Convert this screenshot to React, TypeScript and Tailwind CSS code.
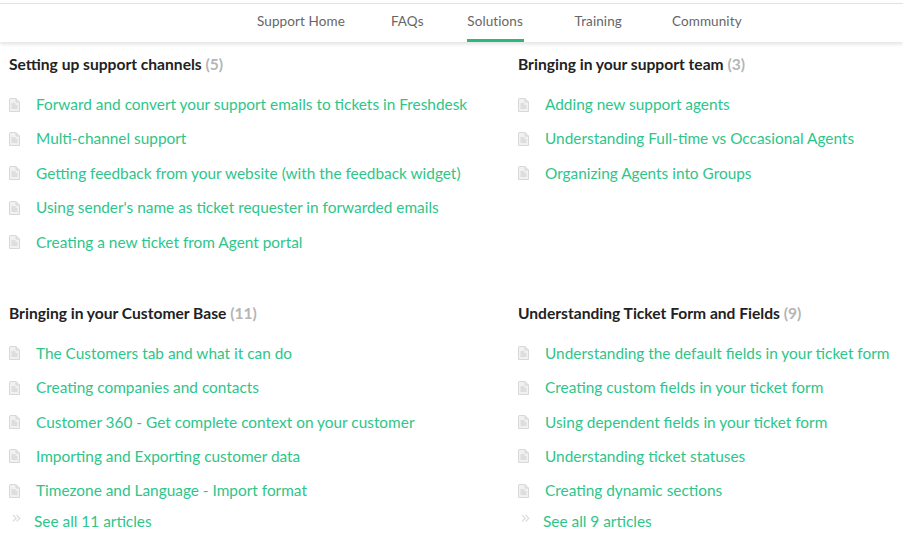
const FONT = "font-['Lato','Noto_Sans',sans-serif]";

const tabs = [
  { label: "Support Home", margin: "ml-[257px]" },
  { label: "FAQs", margin: "ml-[46px]" },
  { label: "Solutions", margin: "ml-[43px] w-[57px] justify-center", active: true },
  { label: "Training", margin: "ml-[51px]" },
  { label: "Community", margin: "ml-[50px]" },
];

const sections = [
  {
    title: "Setting up support channels",
    count: 5,
    articles: [
      "Forward and convert your support emails to tickets in Freshdesk",
      "Multi-channel support",
      "Getting feedback from your website (with the feedback widget)",
      "Using sender's name as ticket requester in forwarded emails",
      "Creating a new ticket from Agent portal",
    ],
  },
  {
    title: "Bringing in your support team",
    count: 3,
    articles: [
      "Adding new support agents",
      "Understanding Full-time vs Occasional Agents",
      "Organizing Agents into Groups",
    ],
  },
  {
    title: "Bringing in your Customer Base",
    count: 11,
    seeAll: "See all 11 articles",
    articles: [
      "The Customers tab and what it can do",
      "Creating companies and contacts",
      "Customer 360 - Get complete context on your customer",
      "Importing and Exporting customer data",
      "Timezone and Language - Import format",
    ],
  },
  {
    title: "Understanding Ticket Form and Fields",
    count: 9,
    seeAll: "See all 9 articles",
    articles: [
      "Understanding the default fields in your ticket form",
      "Creating custom fields in your ticket form",
      "Using dependent fields in your ticket form",
      "Understanding ticket statuses",
      "Creating dynamic sections",
    ],
  },
];

function DocIcon() {
  return (
    <svg width="11" height="14" viewBox="0 0 11 14" className="shrink-0">
      <path d="M1 .5h6l3.5 3.5v9.5H.5V1z" fill="#f1f1f1" stroke="#d8d8d8" strokeWidth="1" />
      <path d="M7 .5V4h3.5" fill="#e2e2e2" stroke="#d8d8d8" strokeWidth="1" />
      <path d="M2.5 6h4M2.5 8h6M2.5 10h6" stroke="#cacaca" strokeWidth="1" />
    </svg>
  );
}

function Chevrons() {
  return (
    <svg width="9" height="9" viewBox="0 0 9 9" fill="none" stroke="#dedede" strokeWidth="1.3" className="shrink-0">
      <path d="M1 1l3.2 3.2L1 7.5M4.6 1l3.2 3.2-3.2 3.3" />
    </svg>
  );
}

function Section({ title, count, articles, seeAll }: (typeof sections)[number]) {
  return (
    <section className="h-[248.7px] pl-[9px]">
      <h3 className="h-[24px] text-[15.6px] leading-[24px] font-bold text-[#222]">
        {title} <span className="font-bold text-[#b5b5b5]">({count})</span>
      </h3>
      <ul className="mt-[11.4px]">
        {articles.map((a) => (
          <li key={a} className="flex h-[34.4px] items-center">
            <DocIcon />
            <a className="ml-[16px] text-[15.4px] whitespace-nowrap text-[#2ec58a]">{a}</a>
          </li>
        ))}
      </ul>
      {seeAll && (
        <a className="mt-[1.5px] ml-[3px] flex h-[24px] items-center text-[15.4px] text-[#2ec58a]">
          <span className="-mt-[6px]">
            <Chevrons />
          </span>
          <span className="ml-[13px]">{seeAll}</span>
        </a>
      )}
    </section>
  );
}

export default function App() {
  return (
    <div className={`min-h-[545px] bg-white pt-[3px] ${FONT}`}>
      <nav className="flex h-[39px] border-t border-[#e3e3e3] shadow-[0_2px_4px_rgba(0,0,0,0.12)]">
        {tabs.map((t) => (
          <a
            key={t.label}
            className={`${t.margin} flex h-full items-center border-b-[3px] text-[13.5px] tracking-[0.1px] text-[#666] ${
              t.active ? "border-[#2cb878]" : "border-transparent"
            }`}
          >
            {t.label}
          </a>
        ))}
      </nav>
      <main className="grid grid-cols-[509px_1fr] pt-[10px]">
        {sections.map((s) => (
          <Section key={s.title} {...s} />
        ))}
      </main>
    </div>
  );
}
